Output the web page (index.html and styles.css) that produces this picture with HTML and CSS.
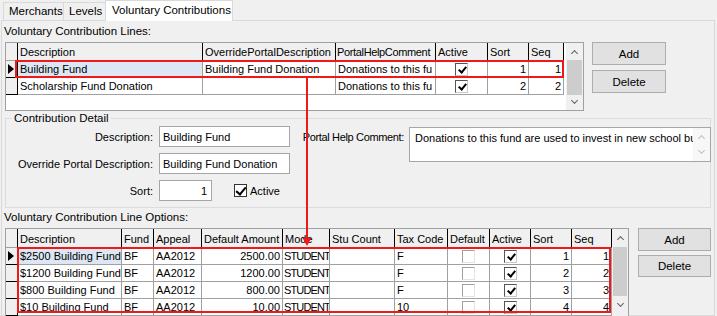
FILE: index.html
```html
<!DOCTYPE html>
<html>
<head>
<meta charset="utf-8">
<link rel="stylesheet" href="styles.css">
</head>
<body>
<div class="tabs">
  <div class="tab tab-merchants">Merchants</div>
  <div class="tab tab-levels">Levels</div>
  <div class="tab tab-active">Voluntary Contributions</div>
</div>
<div class="page">
  <div class="caption">Voluntary Contribution Lines:</div>
  <div class="grid-area">
    <div class="grid grid-lines">
      <div class="grid-body">
        <div class="row head">
          <div class="rh"></div>
          <div class="hc">Description</div>
          <div class="hc">OverridePortalDescription</div>
          <div class="hc tight">PortalHelpComment</div>
          <div class="hc">Active</div>
          <div class="hc">Sort</div>
          <div class="hc">Seq</div>
        </div>
        <div class="row">
          <div class="rh"><span class="cur"></span></div>
          <div class="cell sel">Building Fund</div>
          <div class="cell">Building Fund Donation</div>
          <div class="cell">Donations to this fu</div>
          <div class="cell mid"><span class="chk on"></span></div>
          <div class="cell num">1</div>
          <div class="cell num">1</div>
        </div>
        <div class="row">
          <div class="rh"></div>
          <div class="cell">Scholarship Fund Donation</div>
          <div class="cell"></div>
          <div class="cell">Donations to this fu</div>
          <div class="cell mid"><span class="chk on"></span></div>
          <div class="cell num">2</div>
          <div class="cell num">2</div>
        </div>
      </div>
      <div class="vscroll vscroll-lines">
        <div class="sb-btn"><span class="arr up"></span></div>
        <div class="sb-thumb"></div>
        <div class="sb-btn sb-down"><span class="arr down"></span></div>
      </div>
    </div>
    <div class="btns">
      <div class="btn">Add</div>
      <div class="btn">Delete</div>
    </div>
  </div>

  <fieldset class="detail">
    <legend class="legend">Contribution Detail</legend>
    <div class="detail-body">
      <div class="form">
        <div class="lbl">Description:</div>
        <div class="input">Building Fund</div>
        <div class="lbl">Override Portal Description:</div>
        <div class="input">Building Fund Donation</div>
        <div class="lbl">Sort:</div>
        <div class="sort-row">
          <div class="input input-sort">1</div>
          <div class="check-label"><span class="box"></span>Active</div>
        </div>
      </div>
      <div class="help">
        <div class="lbl help-lbl">Portal Help Comment:</div>
        <div class="memo">
          <div class="memo-text">Donations to this fund are used to invest in new school bu</div>
          <div class="memo-sb"><span class="arr up light"></span><span class="arr down light"></span></div>
        </div>
      </div>
    </div>
  </fieldset>

  <div class="caption caption-2">Voluntary Contribution Line Options:</div>
  <div class="grid-area">
    <div class="grid grid-opts">
      <div class="grid-body">
        <div class="row head">
          <div class="rh"></div>
          <div class="hc">Description</div>
          <div class="hc">Fund</div>
          <div class="hc">Appeal</div>
          <div class="hc">Default Amount</div>
          <div class="hc">Mode</div>
          <div class="hc">Stu Count</div>
          <div class="hc">Tax Code</div>
          <div class="hc">Default</div>
          <div class="hc">Active</div>
          <div class="hc">Sort</div>
          <div class="hc">Seq</div>
        </div>
        <div class="row">
          <div class="rh"><span class="cur"></span></div>
          <div class="cell sel">$2500 Building Fund</div>
          <div class="cell">BF</div>
          <div class="cell">AA2012</div>
          <div class="cell num">2500.00</div>
          <div class="cell mode">STUDENT</div>
          <div class="cell"></div>
          <div class="cell">F</div>
          <div class="cell mid"><span class="chk"></span></div>
          <div class="cell mid"><span class="chk on"></span></div>
          <div class="cell num">1</div>
          <div class="cell num">1</div>
        </div>
        <div class="row">
          <div class="rh"></div>
          <div class="cell">$1200 Building Fund</div>
          <div class="cell">BF</div>
          <div class="cell">AA2012</div>
          <div class="cell num">1200.00</div>
          <div class="cell mode">STUDENT</div>
          <div class="cell"></div>
          <div class="cell">F</div>
          <div class="cell mid"><span class="chk"></span></div>
          <div class="cell mid"><span class="chk on"></span></div>
          <div class="cell num">2</div>
          <div class="cell num">2</div>
        </div>
        <div class="row">
          <div class="rh"></div>
          <div class="cell">$800 Building Fund</div>
          <div class="cell">BF</div>
          <div class="cell">AA2012</div>
          <div class="cell num">800.00</div>
          <div class="cell mode">STUDENT</div>
          <div class="cell"></div>
          <div class="cell">F</div>
          <div class="cell mid"><span class="chk"></span></div>
          <div class="cell mid"><span class="chk on"></span></div>
          <div class="cell num">3</div>
          <div class="cell num">3</div>
        </div>
        <div class="row">
          <div class="rh"></div>
          <div class="cell">$10 Building Fund</div>
          <div class="cell">BF</div>
          <div class="cell">AA2012</div>
          <div class="cell num">10.00</div>
          <div class="cell mode">STUDENT</div>
          <div class="cell"></div>
          <div class="cell">10</div>
          <div class="cell mid"><span class="chk"></span></div>
          <div class="cell mid"><span class="chk on"></span></div>
          <div class="cell num">4</div>
          <div class="cell num">4</div>
        </div>
      </div>
      <div class="vscroll vscroll-opts">
        <div class="sb-btn sb-up2"><span class="arr up"></span></div>
        <div class="sb-thumb"></div>
        <div class="sb-btn sb-down"><span class="arr down"></span></div>
      </div>
    </div>
    <div class="btns btns-2">
      <div class="btn">Add</div>
      <div class="btn">Delete</div>
    </div>
  </div>
</div>

<svg class="annot" width="717" height="316" viewBox="0 0 717 316">
  <rect x="16" y="61" width="547" height="16" fill="none" stroke="#f01818" stroke-width="2"/>
  <line x1="307" y1="78" x2="307" y2="240" stroke="#f01818" stroke-width="2"/>
  <polygon points="302.5,238 311.5,238 307,246" fill="#f01818"/>
  <rect x="18" y="248" width="592" height="64" fill="none" stroke="#f01818" stroke-width="2"/>
</svg>
</body>
</html>
```
FILE: styles.css
```css
* { box-sizing: border-box; }

body {
  margin: 0;
  width: 717px;
  height: 316px;
  overflow: hidden;
  position: relative;
  background: #f0f0f0;
  font: 11px "Liberation Sans", Arial, sans-serif;
  color: #000;
}

/* ---------- tabs ---------- */
.tabs {
  display: flex;
  align-items: flex-end;
  height: 20px;
  padding-left: 3px;
}
.tab {
  height: 18px;
  line-height: 17px;
  padding: 0 4px 0 5px;
  border: 1px solid #d9d9d9;
  border-bottom: none;
  background: #f0f0f0;
  white-space: nowrap;
  font-size: 11.5px;
}
.tab-merchants { width: 61px; }
.tab-levels { width: 43px; margin-left: -1px; }
.tab-active {
  position: relative;
  z-index: 1;
  width: 128px;
  height: 21px;
  margin-left: -1px;
  margin-bottom: -1px;
  line-height: 19px;
  padding-left: 6px;
  background: #ffffff;
}

/* ---------- page ---------- */
.page {
  margin-left: 1px;
  width: 714px;
  height: 296px;
  border: 1px solid #d9d9d9;
  padding-left: 3px;
}
.caption {
  margin: 4px 0 5px -1px;
  height: 12px;
  line-height: 12px;
  white-space: nowrap;
  font-size: 11.5px;
}
.caption-2 { margin-top: 3px; }

.grid-area {
  display: flex;
  align-items: flex-start;
  gap: 8px;
}

/* ---------- data grid ---------- */
.grid {
  display: flex;
  background: #fff;
  border: 1px solid #a0a0a0;
  overflow: hidden;
}
.grid-lines { width: 579px; height: 69px; }
.grid-opts { width: 624px; height: 100px; }

.grid-body { display: flex; flex-direction: column; }
.row { display: grid; height: 17px; }
.grid-lines .row { grid-template-columns: 12px 185px 133px 100px 52px 41px 35px; }
.grid-opts .row { grid-template-columns: 12px 104px 32px 48px 81px 47px 65px 53px 42px 41px 41px 40px; }
.grid-lines .row.head { height: 18px; }
.grid-opts .row.head { height: 19px; }

.hc, .cell, .rh {
  white-space: nowrap;
  overflow: hidden;
  padding-left: 2px;
  display: flex;
  align-items: center;
}
.hc {
  background: #f0f0f0;
  border-right: 1px solid #000;
  border-bottom: 1px solid #a0a0a0;
  padding-top: 1px;
}
.hc.tight { letter-spacing: -0.35px; padding-left: 1px; }
.rh {
  background: #f0f0f0;
  border-right: 1px solid #000;
  border-bottom: 1px solid #000;
  padding-left: 1px;
}
.head .rh { border-bottom-color: #a0a0a0; }
.cell {
  border-right: 1px solid #a0a0a0;
  border-bottom: 1px solid #a0a0a0;
}
.cell.sel { background: #dce7f3; }
.cell.num { justify-content: flex-end; padding: 0 2px 0 0; }
.cell.mid { justify-content: center; padding: 0; }
.cell.mode { letter-spacing: -0.85px; padding-left: 1px; }

.cur {
  width: 0;
  height: 0;
  border-top: 5.5px solid transparent;
  border-bottom: 5.5px solid transparent;
  border-left: 6px solid #000;
  margin-left: 1px;
}

.chk {
  width: 13px;
  height: 13px;
  border: 1px solid;
  border-color: #a0a0a0 #e3e3e3 #e3e3e3 #a0a0a0;
  background: #fff;
  position: relative;
}
.chk.on { border-color: #555 #c8c8c8 #c8c8c8 #555; }
.chk.on::after {
  content: "";
  position: absolute;
  left: 4px;
  top: 1px;
  width: 3px;
  height: 6px;
  border: solid #000;
  border-width: 0 2px 2px 0;
  transform: rotate(40deg);
}
.box::after {
  content: "";
  position: absolute;
  left: 3px;
  top: 0px;
  width: 4px;
  height: 8px;
  border: solid #000;
  border-width: 0 2px 2px 0;
  transform: rotate(40deg);
}

/* ---------- scrollbars ---------- */
.vscroll {
  display: flex;
  flex-direction: column;
  background: #f0f0f0;
}
.vscroll-lines { width: 17px; margin-left: 2px; }
.vscroll-opts { width: 16px; }
.sb-btn {
  height: 17px;
  display: flex;
  align-items: center;
  justify-content: center;
  flex: none;
}
.sb-up2 { height: 18px; }
.sb-thumb { flex: 1; background: #cdcdcd; margin: 0 1px; }
.vscroll-lines .sb-thumb { flex: none; height: 35px; }
.vscroll-lines .sb-down { height: 14px; }
.vscroll-opts .sb-thumb { flex: none; height: 49px; }

.arr {
  width: 5px;
  height: 5px;
  border: solid #606060;
  border-width: 1.5px 0 0 1.5px;
}
.arr.up { transform: rotate(45deg); margin-top: 3px; }
.arr.down { transform: rotate(225deg); margin-bottom: 3px; }
.arr.light { border-color: #c0c0c0; }

/* ---------- buttons ---------- */
.btns {
  display: flex;
  flex-direction: column;
  gap: 5px;
  width: 74px;
}
.btns-2 { width: 73px; margin-left: 1px; gap: 4px; }
.btn {
  height: 23px;
  display: flex;
  align-items: center;
  justify-content: center;
  background: #e1e1e1;
  border: 1px solid #adadad;
  font-size: 11.5px;
}
.btns-2 .btn + .btn { height: 22px; }

/* ---------- detail group ---------- */
.detail {
  width: 706px;
  height: 96px;
  border: 1px solid #dcdcdc;
  padding: 0;
  min-width: 0;
  margin: 1px 0 0 0;
}
.legend {
  margin-left: 6px;
  padding: 0 2px;
  line-height: 13px;
  font-size: 11.5px;
}
.detail-body {
  display: flex;
  align-items: flex-start;
  padding-top: 1px;
}
.form {
  display: grid;
  grid-template-columns: 147px 131px;
  column-gap: 6px;
  row-gap: 6px;
  align-items: center;
}
.lbl { text-align: right; white-space: nowrap; }
.input {
  height: 21px;
  background: #fff;
  border: 1px solid #a6a6a6;
  padding-left: 3px;
  display: flex;
  align-items: center;
  white-space: nowrap;
  overflow: hidden;
}
.sort-row { display: flex; align-items: center; gap: 22px; }
.input-sort { width: 53px; justify-content: flex-end; padding: 0 4px 0 0; }
.check-label { display: flex; align-items: center; gap: 3px; }
.box {
  width: 13px;
  height: 13px;
  background: #fff;
  border: 1px solid #333;
  position: relative;
}

.help {
  display: flex;
  align-items: flex-start;
  gap: 5px;
  margin-left: 11px;
}
.help-lbl { margin-top: 5px; letter-spacing: -0.35px; width: 103px; }
.memo {
  width: 302px;
  height: 35px;
  background: #fff;
  border: 1px solid #a6a6a6;
  display: flex;
  margin-top: 1px;
}
.memo-text {
  flex: 1;
  white-space: nowrap;
  overflow: hidden;
  padding: 4px 0 0 5px;
}
.memo-sb {
  width: 17px;
  background: #f7f7f7;
  display: flex;
  flex-direction: column;
  align-items: center;
  justify-content: space-around;
  padding: 2px 0;
}

/* ---------- annotation overlay ---------- */
.annot {
  position: absolute;
  left: 0;
  top: 0;
  pointer-events: none;
}
```
